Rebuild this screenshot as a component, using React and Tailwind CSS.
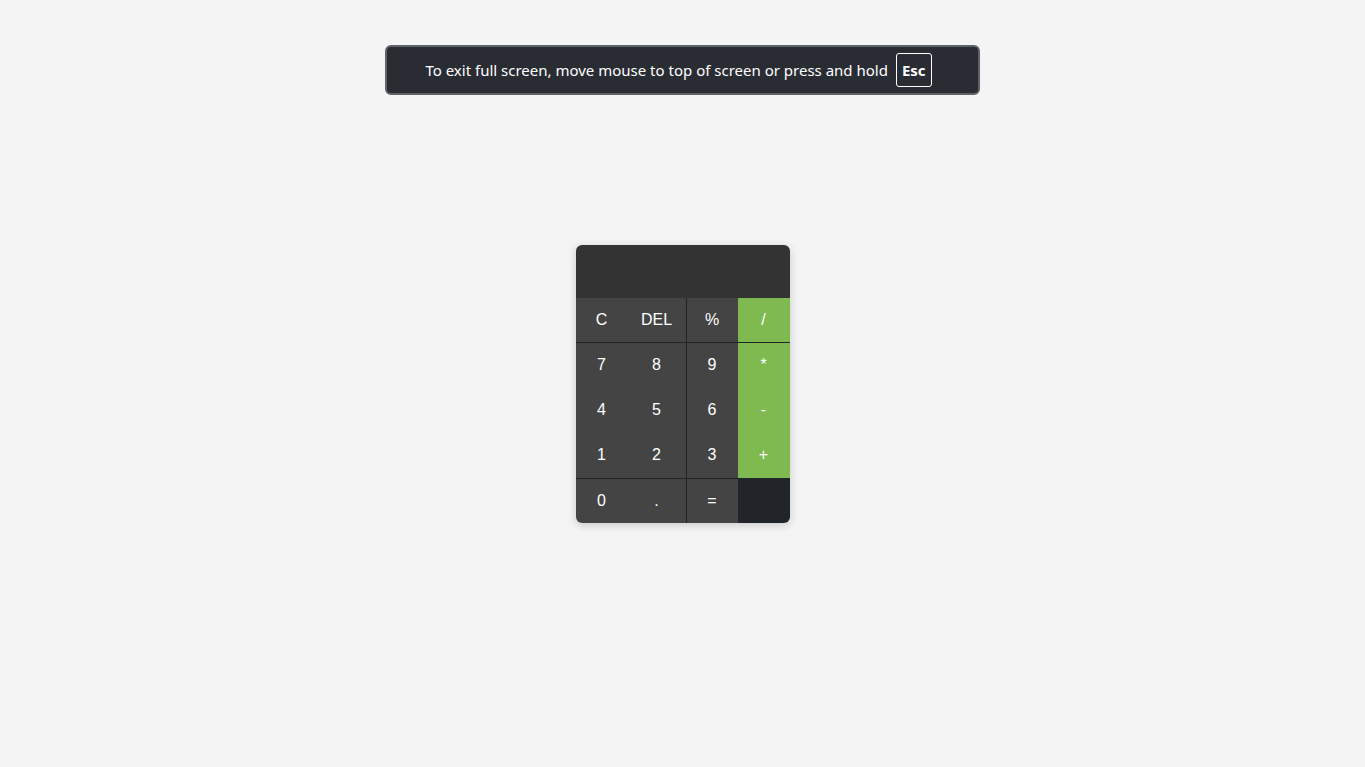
import React, { useState } from 'react';

const Cell = ({ label, className = '', onClick }) => (
    <button
        onClick={() => onClick(label)}
        className={`flex items-center justify-center text-white text-[16px] outline-none ${className}`}
    >
        {label}
    </button>
);

const App = () => {
    const [value, setValue] = useState('');

    const press = (key) => {
        if (key === 'C') return setValue('');
        if (key === 'DEL') return setValue(v => v.slice(0, -1));
        if (key === '=') {
            try {
                // eslint-disable-next-line no-new-func
                setValue(String(Function(`return (${value || 0})`)()));
            } catch {
                setValue('Error');
            }
            return;
        }
        setValue(v => v + key);
    };

    const dark = 'bg-[#444444]';
    const green = 'bg-[#7fba50]';
    const line = 'border-[#212529]';

    return (
        <div className="min-h-screen bg-[#f4f4f4] flex items-center justify-center" style={{ fontFamily: '"Liberation Sans", Arial, sans-serif' }}>
            <div className="absolute top-[45px] left-[385px] w-[595px] h-[50px] rounded-[6px] border-2 border-[#5f6368] bg-[#292c33] flex items-center justify-center gap-[8px] pr-[8px] text-white text-[15px]" style={{ fontFamily: '"Noto Sans", "Open Sans", sans-serif' }}>
                <span>To exit full screen, move mouse to top of screen or press and hold</span>
                <span className="h-[34px] px-[5px] flex items-center border border-white rounded-[3px] font-bold text-[15px]">Esc</span>
            </div>

            <div className="w-[214px] rounded-[6px] overflow-hidden shadow-[0_2px_8px_rgba(0,0,0,0.18)]">
                <div className="h-[53px] bg-[#333333] flex items-center justify-end px-3 text-white text-2xl overflow-hidden">
                    {value}
                </div>
                <div className="grid grid-cols-[52px_58px_52px_52px] grid-rows-[45px_45px_45px_46px_44px]">
                    <Cell label="C" onClick={press} className={`${dark} border-b ${line}`} />
                    <Cell label="DEL" onClick={press} className={`${dark} border-b ${line}`} />
                    <Cell label="%" onClick={press} className={`${dark} border-b border-l ${line}`} />
                    <Cell label="/" onClick={press} className={`${green} border-b ${line}`} />

                    <Cell label="7" onClick={press} className={dark} />
                    <Cell label="8" onClick={press} className={dark} />
                    <Cell label="9" onClick={press} className={`${dark} border-l ${line}`} />
                    <Cell label="*" onClick={press} className={green} />

                    <Cell label="4" onClick={press} className={dark} />
                    <Cell label="5" onClick={press} className={dark} />
                    <Cell label="6" onClick={press} className={`${dark} border-l ${line}`} />
                    <Cell label="-" onClick={press} className={green} />

                    <Cell label="1" onClick={press} className={`${dark} border-b ${line}`} />
                    <Cell label="2" onClick={press} className={`${dark} border-b ${line}`} />
                    <Cell label="3" onClick={press} className={`${dark} border-b border-l ${line}`} />
                    <Cell label="+" onClick={press} className={`${green} border-b ${line}`} />

                    <Cell label="0" onClick={press} className={dark} />
                    <Cell label="." onClick={press} className={dark} />
                    <Cell label="=" onClick={press} className={`${dark} border-l ${line}`} />
                    <div className="bg-[#212529]" />
                </div>
            </div>
        </div>
    );
};

export default App;
